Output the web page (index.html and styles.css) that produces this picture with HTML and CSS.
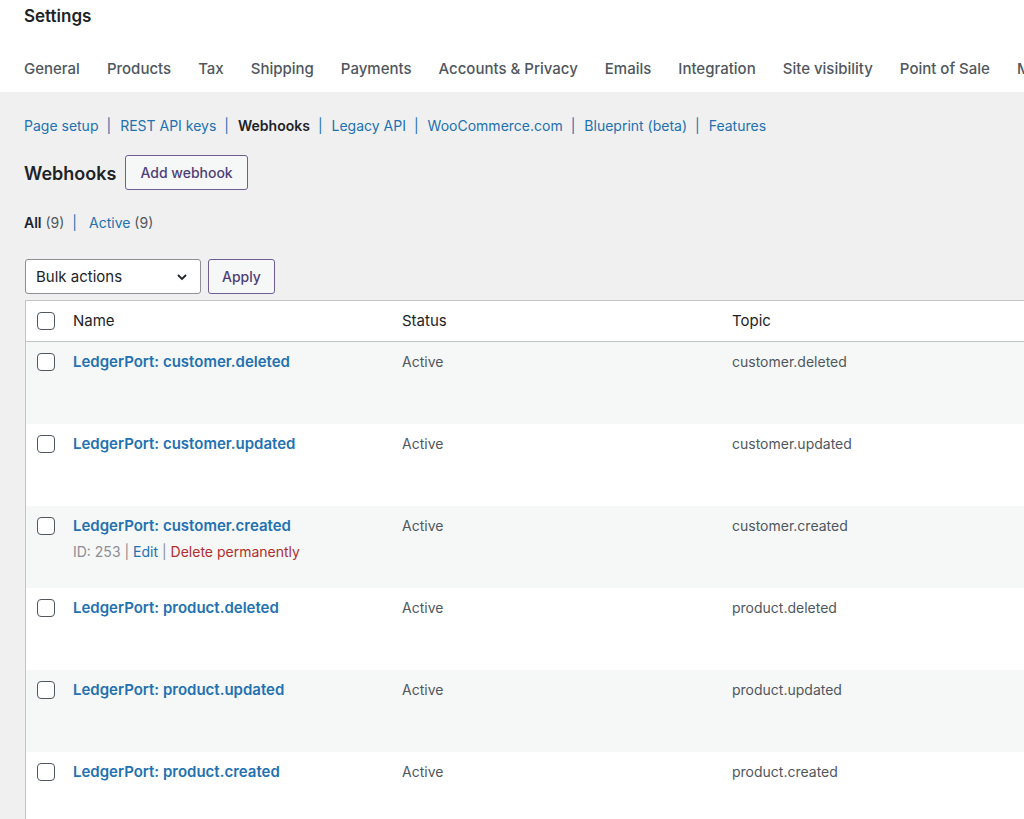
FILE: index.html
```html
<!DOCTYPE html>
<html lang="en">
<head>
  <meta charset="UTF-8">
  <meta name="viewport" content="width=device-width, initial-scale=1">
  <title>Settings - Webhooks</title>
  <link rel="stylesheet" href="styles.css">
</head>
<body>

<header class="top">
  <h1>Settings</h1>
  <nav class="tabs">
    <a href="#">General</a>
    <a href="#">Products</a>
    <a href="#">Tax</a>
    <a href="#">Shipping</a>
    <a href="#">Payments</a>
    <a href="#">Accounts &amp; Privacy</a>
    <a href="#">Emails</a>
    <a href="#">Integration</a>
    <a href="#">Site visibility</a>
    <a href="#">Point of Sale</a>
    <a href="#">More</a>
  </nav>
</header>

<main class="wrap">
  <ul class="subnav">
    <li><a href="#">Page setup</a></li>
    <li><a href="#">REST API keys</a></li>
    <li><a href="#" class="current">Webhooks</a></li>
    <li><a href="#">Legacy API</a></li>
    <li><a href="#">WooCommerce.com</a></li>
    <li><a href="#">Blueprint (beta)</a></li>
    <li><a href="#">Features</a></li>
  </ul>

  <div class="title-row">
    <h2>Webhooks</h2>
    <a href="#" class="btn">Add webhook</a>
  </div>

  <ul class="views">
    <li><a href="#" class="current">All</a> <span class="count">(9)</span></li>
    <li><a href="#">Active</a> <span class="count">(9)</span></li>
  </ul>

  <div class="tablenav">
    <div class="select">
      <span>Bulk actions</span>
      <svg width="14" height="14" viewBox="0 0 14 14"><path d="M3 5l4 4 4-4" fill="none" stroke="#1d2327" stroke-width="1.8"/></svg>
    </div>
    <button class="btn">Apply</button>
  </div>

  <table class="list">
    <thead>
      <tr>
        <th class="check"><span class="box"></span></th>
        <th class="col-name">Name</th>
        <th class="col-status">Status</th>
        <th>Topic</th>
      </tr>
    </thead>
    <tbody>
      <tr>
        <td class="check"><span class="box"></span></td>
        <td><a href="#" class="row-title">LedgerPort: customer.deleted</a></td>
        <td>Active</td>
        <td>customer.deleted</td>
      </tr>
      <tr>
        <td class="check"><span class="box"></span></td>
        <td><a href="#" class="row-title">LedgerPort: customer.updated</a></td>
        <td>Active</td>
        <td>customer.updated</td>
      </tr>
      <tr>
        <td class="check"><span class="box"></span></td>
        <td>
          <a href="#" class="row-title">LedgerPort: customer.created</a>
          <div class="row-actions">ID: 253 | <a href="#">Edit</a> | <a href="#" class="delete">Delete permanently</a></div>
        </td>
        <td>Active</td>
        <td>customer.created</td>
      </tr>
      <tr>
        <td class="check"><span class="box"></span></td>
        <td><a href="#" class="row-title">LedgerPort: product.deleted</a></td>
        <td>Active</td>
        <td>product.deleted</td>
      </tr>
      <tr>
        <td class="check"><span class="box"></span></td>
        <td><a href="#" class="row-title">LedgerPort: product.updated</a></td>
        <td>Active</td>
        <td>product.updated</td>
      </tr>
      <tr>
        <td class="check"><span class="box"></span></td>
        <td><a href="#" class="row-title">LedgerPort: product.created</a></td>
        <td>Active</td>
        <td>product.created</td>
      </tr>
    </tbody>
  </table>
</main>

</body>
</html>
```

FILE: styles.css
```css
body {
  font-family: Inter, "Noto Sans", sans-serif;
  font-size: 15px;
  line-height: 20px;
  color: #1d2327;
  background: #f0f0f1;
  margin: 0;
  padding: 0;
  overflow: hidden;
}
a {
  color: #2271b1;
  text-decoration: none;
}
ul {
  list-style: none;
  margin: 0;
  padding: 0;
}

/* top white header with settings tabs */
.top {
  background: #fff;
  padding: 6px 0 13px 24px;
}
.top h1 {
  margin: 0;
  font-size: 17px;
  line-height: 20px;
  font-weight: 600;
}
.tabs {
  display: flex;
  gap: 27px;
  margin-top: 33px;
  white-space: nowrap;
}
.tabs a {
  color: #50575e;
  font-weight: 500;
}

/* grey content area */
.wrap {
  padding: 24px 0 0 24px;
}
.subnav {
  display: flex;
  font-size: 14px;
  white-space: nowrap;
}
.subnav li + li::before {
  content: "|";
  color: #2271b1;
  margin: 0 9px 0 8px;
}
.subnav .current {
  color: #1d2327;
  font-weight: 600;
}

.title-row {
  display: flex;
  align-items: center;
  gap: 9px;
  margin-top: 19px;
}
.title-row h2 {
  margin: 3px 0 0;
  font-size: 18px;
  font-weight: 600;
}
.btn {
  display: inline-flex;
  align-items: center;
  height: 35px;
  box-sizing: border-box;
  padding: 0 14px;
  border: 1px solid #6f5d97;
  border-radius: 3px;
  background: #f6f7f7;
  color: #4f3f77;
  font: inherit;
  font-size: 14px;
  font-weight: 500;
}

.views {
  display: flex;
  font-size: 14px;
  margin-top: 23px;
}
.views li + li::before {
  content: "|";
  color: #2271b1;
  margin: 0 12px 0 8px;
}
.views .current {
  color: #1d2327;
  font-weight: 600;
}
.views .count {
  color: #50575e;
}

.tablenav {
  display: flex;
  gap: 7px;
  margin-top: 26px;
}
.select {
  display: flex;
  align-items: center;
  justify-content: space-between;
  width: 176px;
  height: 35px;
  box-sizing: border-box;
  padding: 0 11px 0 10px;
  margin-left: 1px;
  background: #fff;
  border: 1px solid #8c8f94;
  border-radius: 3px;
}
.tablenav .btn {
  padding: 0 13px;
}

/* list table */
.list {
  margin: 6px 0 0 1px;
  width: 1200px;
  border: 1px solid #c3c4c7;
  border-collapse: collapse;
  background: #fff;
}
.list th,
.list td {
  text-align: left;
  vertical-align: top;
  padding: 10px 12px;
}
.list th {
  font-weight: 400;
  border-bottom: 1px solid #c3c4c7;
}
.list td {
  height: 62px;
  font-size: 14px;
  color: #50575e;
}
.list .check {
  width: 24px;
  padding: 11px 0 0 11px;
}
.list .col-name {
  width: 305px;
}
.list .col-status {
  width: 306px;
}
.list tbody tr:nth-child(odd) {
  background: #f6f7f7;
}
.box {
  display: block;
  width: 18px;
  height: 18px;
  box-sizing: border-box;
  border: 1.5px solid #50575e;
  border-radius: 4px;
  background: #fff;
}
.row-title {
  font-size: 15px;
  font-weight: 600;
}
.row-actions {
  margin-top: 6px;
  color: #8c8f94;
}
.row-actions .delete {
  color: #b32d2e;
}
```
